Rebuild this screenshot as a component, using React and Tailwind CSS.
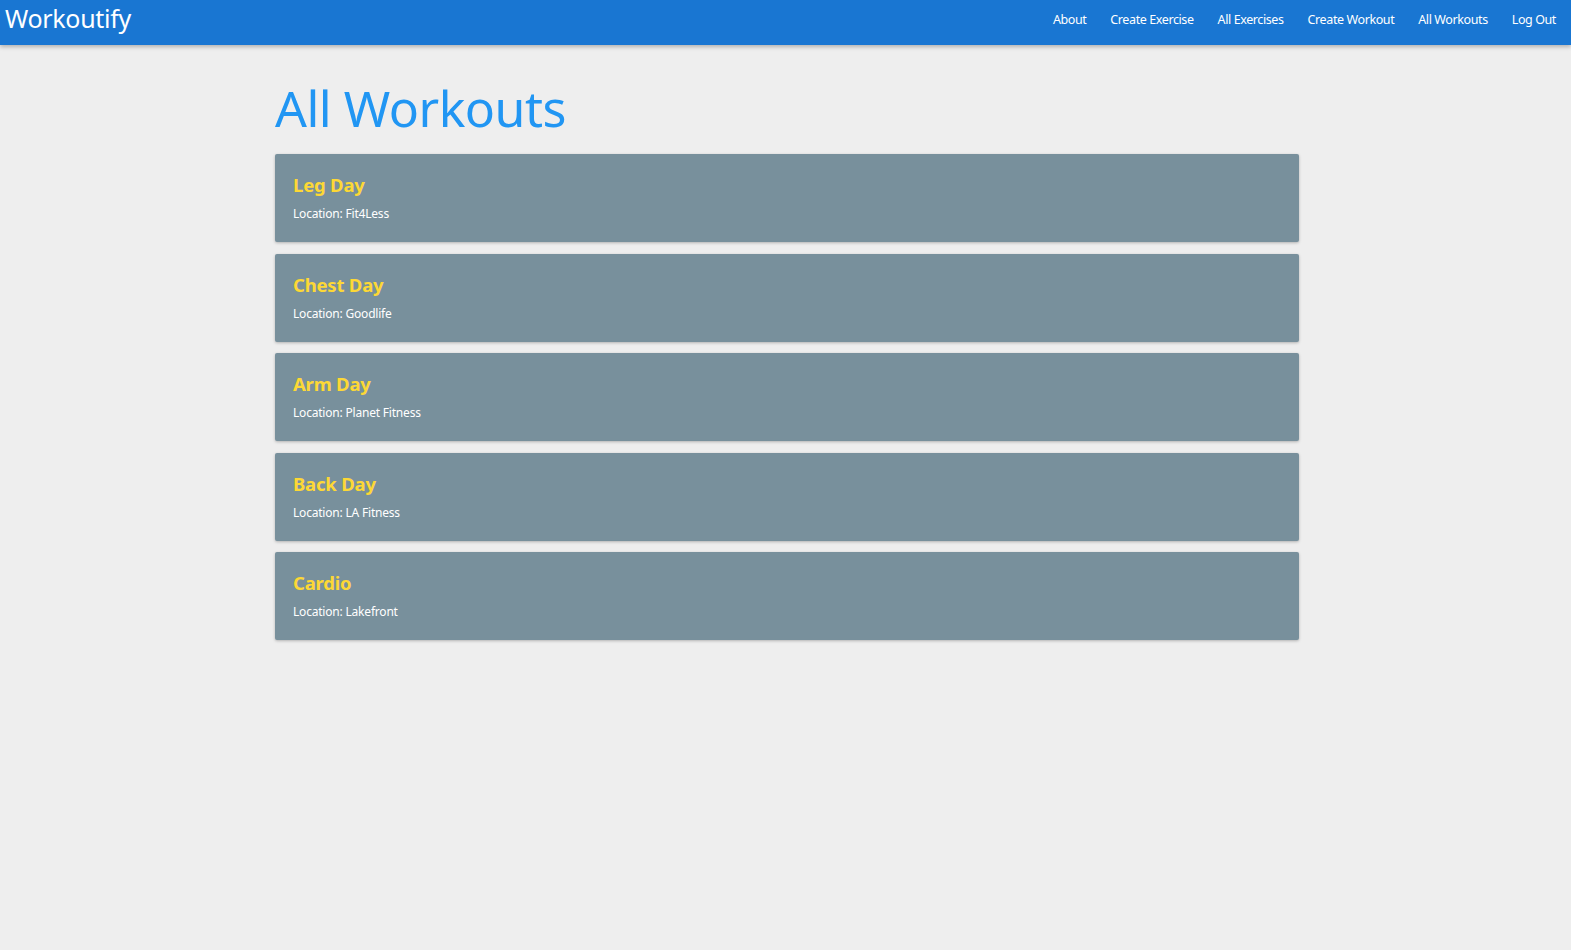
import React from "react";

const workouts = [
  { name: "Leg Day", location: "Fit4Less" },
  { name: "Chest Day", location: "Goodlife" },
  { name: "Arm Day", location: "Planet Fitness" },
  { name: "Back Day", location: "LA Fitness" },
  { name: "Cardio", location: "Lakefront" },
];

const links = ["About", "Create Exercise", "All Exercises", "Create Workout", "All Workouts", "Log Out"];

export default function App() {
  return (
    <div className="min-h-[950px] bg-[#eeeeee] font-['Noto_Sans',sans-serif]">
      {/* top bar */}
      <nav className="flex h-[45px] items-start justify-between bg-[#1976d2] shadow-[0_2px_4px_rgba(0,0,0,0.25)]">
        <a className="pl-[5px] pt-[4px] text-[25px] leading-[28px] text-white tracking-[-0.3px]">Workoutify</a>
        <ul className="flex items-center pr-[3px] pt-[12px]">
          {links.map((l) => (
            <li key={l} className="px-[12px] text-[12.5px] leading-[16px] text-white tracking-[-0.4px]">
              {l}
            </li>
          ))}
        </ul>
      </nav>

      <div className="ml-[275px] w-[1024px]">
        <h1 className="mt-[32px] mb-[15px] text-[50px] leading-[62px] text-[#2196f3] tracking-[-0.5px]">
          All Workouts
        </h1>

        <div className="flex flex-col gap-[11.5px]">
          {workouts.map((w) => (
            <div
              key={w.name}
              className="h-[88px] rounded-[2px] bg-[#78909c] px-[18px] pt-[19px] shadow-[0_1px_3px_rgba(0,0,0,0.25)]"
            >
              <h3 className="text-[18.5px] font-bold leading-[24px] text-[#fdd835] tracking-[-0.2px]">{w.name}</h3>
              <p className="mt-[9px] text-[12px] leading-[16px] text-white tracking-[-0.2px]">Location: {w.location}</p>
            </div>
          ))}
        </div>
      </div>
    </div>
  );
}
